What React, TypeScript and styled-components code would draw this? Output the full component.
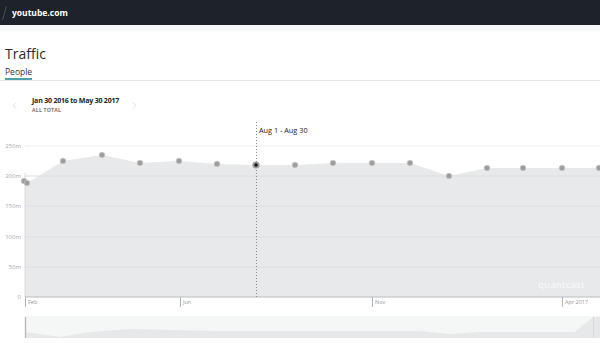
import React from 'react'
import styled, { createGlobalStyle } from 'styled-components'
import { ChevronLeft, ChevronRight } from 'lucide-react'

const GlobalStyle = createGlobalStyle`
  html, body {
    margin: 0;
    padding: 0;
    background: #ffffff;
    font-family: 'Open Sans', 'Liberation Sans', sans-serif;
    overflow: hidden;
  }
`

const points: [number, number][] = [
  [24, 63],
  [27, 65],
  [63, 43],
  [102, 37],
  [140, 45],
  [179, 43],
  [217, 46],
  [256, 47],
  [295, 47],
  [333, 45],
  [372, 45],
  [410, 45],
  [449, 58],
  [487, 50],
  [523, 50],
  [562, 50],
  [599, 50],
]

const gridLines = [
  { y: 28, label: '250m' },
  { y: 58, label: '200m' },
  { y: 88, label: '150m' },
  { y: 119, label: '100m' },
  { y: 149, label: '50m' },
  { y: 179, label: '0' },
]

const ticks = [
  { x: 25, label: 'Feb' },
  { x: 180, label: 'Jun' },
  { x: 372, label: 'Nov' },
  { x: 562, label: 'Apr 2017' },
]

const App: React.FC = () => {
  const area =
    `M25,179 L25,65 ` +
    points
      .filter(([x]) => x > 25)
      .map(([x, y]) => `L${x},${y}`)
      .join(' ') +
    ' L600,50 L600,179 Z'

  return (
    <Page>
      <GlobalStyle />
      <Header>
        <Slash />
        <Site>youtube.com</Site>
      </Header>
      <Strip />
      <Main>
        <Title>Traffic</Title>
        <Tabs>
          <Tab $active>People</Tab>
        </Tabs>
        <DateNav>
          <NavArrow>
            <ChevronLeft size={11} strokeWidth={1.4} />
          </NavArrow>
          <Range>
            <RangeText>Jan 30 2016 to May 30 2017</RangeText>
            <RangeSub>ALL TOTAL</RangeSub>
          </Range>
          <NavArrow>
            <ChevronRight size={11} strokeWidth={1.4} />
          </NavArrow>
        </DateNav>
      </Main>
      <Chart width={600} height={225} viewBox="0 0 600 225">
        <path d={area} fill="#e7e9ea" />
        {gridLines.map((g) => (
          <g key={g.label}>
            <line
              x1={25}
              x2={600}
              y1={g.y}
              y2={g.y}
              stroke={g.label === '0' ? '#b9bcbe' : g.y < 40 ? '#eeeeee' : '#dcdfe0'}
              strokeWidth={1}
            />
            <text
              x={21}
              y={g.y + 2}
              textAnchor="end"
              fontSize={6}
              fill="#a9a9a9"
            >
              {g.label}
            </text>
          </g>
        ))}
        <line x1={25} x2={25} y1={55} y2={179} stroke="#d8dadb" strokeWidth={1} />
        <line
          x1={256.5}
          x2={256.5}
          y1={4}
          y2={179}
          stroke="#8a8a8a"
          strokeWidth={1}
          strokeDasharray="1 2"
        />
        <text x={259} y={14.5} fontSize={7.3} fill="#222" fontWeight={500}>
          Aug 1 - Aug 30
        </text>
        {points.map(([x, y], i) =>
          x === 256 ? (
            <g key={i}>
              <circle cx={x} cy={y} r={3.6} fill="#9b9b9b" />
              <circle cx={x} cy={y} r={1.7} fill="#111" />
            </g>
          ) : (
            <circle key={i} cx={x} cy={y} r={2.8} fill="#9d9d9d" stroke="#c7c7c7" strokeWidth={0.8} />
          )
        )}
        <text x={538} y={170} fontSize={9.5} fill="#ffffff" opacity={0.85} letterSpacing={0.3}>
          quantcast
        </text>
        {ticks.map((t) => (
          <g key={t.label}>
            <line x1={t.x + 0.5} x2={t.x + 0.5} y1={179} y2={189} stroke="#b3b3b3" strokeWidth={1} />
            <text x={t.x + 3} y={186} fontSize={5.5} fill="#999">
              {t.label}
            </text>
          </g>
        ))}
        <rect x={25} y={198} width={575} height={22} fill="#f5f6f6" />
        <path
          d="M25,214 L40,216 L60,219 L90,214 L130,211 L170,212 L220,213 L300,213 L420,213 L450,216 L480,214 L575,214 L593,199 L600,199 L600,220 L25,220 Z"
          fill="#e6e8e9"
        />
        <line x1={25.5} x2={25.5} y1={199} y2={220} stroke="#b8b8b8" strokeWidth={1.4} />
        <line x1={593.5} x2={593.5} y1={199} y2={220} stroke="#d6d6d6" strokeWidth={1} />
      </Chart>
    </Page>
  )
}

export default App

const Page = styled.div`
  width: 600px;
  height: 343px;
  overflow: hidden;
  background: #ffffff;
`

const Header = styled.div`
  height: 25px;
  background: #1d222b;
  display: flex;
  align-items: center;
  padding-left: 4px;
  box-sizing: border-box;
`

const Slash = styled.span`
  width: 1px;
  height: 14px;
  background: #4a4f57;
  transform: skewX(-15deg);
  margin-right: 7px;
`

const Site = styled.span`
  color: #ffffff;
  font-size: 8.5px;
  font-weight: 700;
`

const Strip = styled.div`
  height: 6px;
  background: #f7f8f9;
`

const Main = styled.div`
  padding-left: 5px;
`

const Title = styled.h1`
  margin: 14px 0 0;
  font-size: 14px;
  line-height: 18px;
  font-weight: 400;
  color: #2b2b2b;
`

const Tabs = styled.div`
  display: flex;
  border-bottom: 1px solid #e3e5e6;
  margin-left: -5px;
  padding-left: 5px;
`

const Tab = styled.div<{ $active?: boolean }>`
  padding-top: 4px;
  padding-bottom: 1px;
  font-size: 8.5px;
  line-height: 10px;
  color: #333;
  border-bottom: 2px solid ${(p) => (p.$active ? '#4aa1a8' : 'transparent')};
`

const DateNav = styled.div`
  height: 37px;
  box-sizing: border-box;
  padding-top: 11px;
  display: flex;
  align-items: center;
`

const NavArrow = styled.div`
  display: flex;
  color: #c9cbcd;
  margin: 0 8px 0 4px;
`

const Range = styled.div`
  display: flex;
  flex-direction: column;
  margin-left: 4px;
  margin-right: 6px;
  white-space: nowrap;
`

const RangeText = styled.div`
  font-size: 7px;
  line-height: 10px;
  font-weight: 700;
  color: #222;
  letter-spacing: -0.2px;
`

const RangeSub = styled.div`
  font-size: 5.2px;
  line-height: 8px;
  font-weight: 700;
  color: #777;
  letter-spacing: 0.2px;
`

const Chart = styled.svg`
  display: block;
  font-family: 'Open Sans', 'Liberation Sans', sans-serif;
`
